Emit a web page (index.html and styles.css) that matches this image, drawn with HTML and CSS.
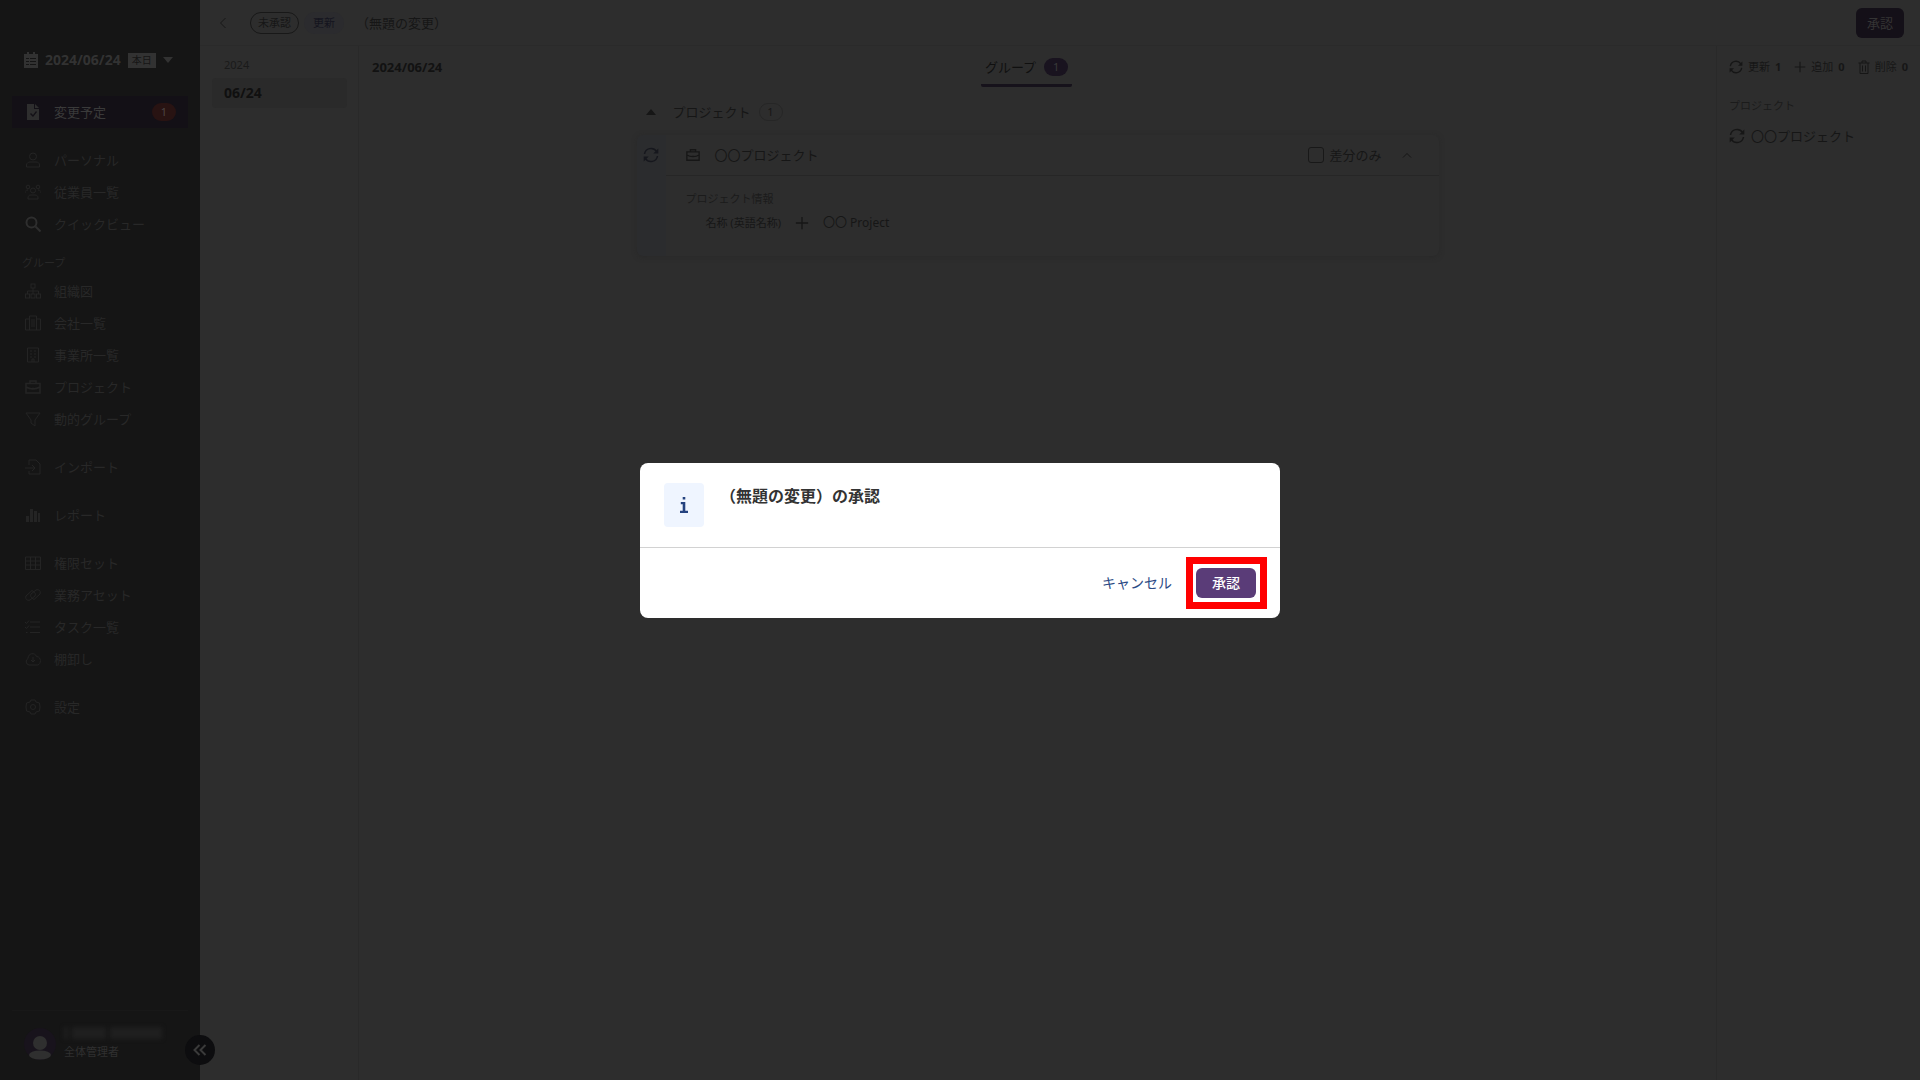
FILE: index.html
```html
<!DOCTYPE html>
<html lang="ja">
<head>
  <meta charset="UTF-8">
  <meta name="viewport" content="width=device-width, initial-scale=1.0">
  <title>変更予定</title>
  <link rel="stylesheet" href="styles.css">
</head>
<body>
  <svg class="sprite" aria-hidden="true">
    <symbol id="refresh" viewBox="0 0 16 16">
      <path d="M1.5 7a6.6 6.6 0 0 1 12-2.6M14.5 9a6.6 6.6 0 0 1-12 2.6" fill="none" stroke="currentColor" stroke-width="1.5"/>
      <path d="M15.3 1.6v5h-5zM.7 14.4v-5h5z" fill="currentColor"/>
    </symbol>
    <symbol id="plus" viewBox="0 0 16 16"><path d="M8 1v14M1 8h14" stroke-width="1.500"/></symbol>
    <symbol id="briefcase" viewBox="0 0 16 16"><path d="M1 4.500h14v9.500H1zM5 4.500V2h6v2.500M1 8c4 2.500 10 2.500 14 0M7 9.500h2" stroke-width="1.500"/></symbol>
  </svg>

  <div class="app">
    <aside class="sidebar">
      <button class="date-select" type="button">
        <svg width="14" height="16" viewBox="0 0 14 16"><path fill="currentColor" fill-rule="evenodd" d="M3 0h2v2h4V0h2v2h3v14H0V2h3zM2 6v1h3V6zm4 0v1h6V6zM2 9v1h3V9zm4 0v1h6V9zM2 12v1h3v-1zm4 0v1h6v-1z"/></svg>
        <span class="date">2024/06/24</span>
        <span class="today">本日</span>
        <svg width="10" height="6" viewBox="0 0 10 6"><path fill="currentColor" d="M0 0h10L5 6z"/></svg>
      </button>

      <nav class="menu">
        <ul>
          <li><a class="active" href="#"><svg viewBox="0 0 16 16"><path fill="currentColor" fill-rule="evenodd" d="M2 0h7v5h5v11H2zM10 0l4 4h-4zM5 10l3 3 4-5-1-1-3 4-2-2z"/></svg>変更予定<span class="count">1</span></a></li>
        </ul>
        <ul>
          <li><a href="#"><svg viewBox="0 0 16 16"><circle cx="8" cy="4.500" r="3.500"/><path d="M1.500 15v-2c0-2 2-3 3.500-3h6c2 0 3.500 1 3.500 3v2z"/></svg>パーソナル</a></li>
          <li><a href="#"><svg viewBox="0 0 16 16"><circle cx="3" cy="3" r="1.800"/><circle cx="13" cy="3" r="1.800"/><circle cx="8" cy="6.500" r="2.500"/><path d="M0 9V8c0-1 1-2 3-2M16 9V8c0-1-1-2-3-2M3 15v-1c0-2 1-3 3-3h4c2 0 3 1 3 3v1z"/></svg>従業員一覧</a></li>
          <li><a class="bright" href="#"><svg viewBox="0 0 16 16"><circle cx="6.500" cy="6.500" r="5"/><path d="M10.500 10.500l5 5"/></svg>クイックビュー</a></li>
        </ul>
        <h2>グループ</h2>
        <ul>
          <li><a href="#"><svg viewBox="0 0 16 16"><rect x="6" y="1" width="4" height="4"/><rect x="0.500" y="11" width="4" height="4"/><rect x="6" y="11" width="4" height="4"/><rect x="11.500" y="11" width="4" height="4"/><path d="M8 5v6M2.500 11V8h11v3"/></svg>組織図</a></li>
          <li><a href="#"><svg viewBox="0 0 16 16"><path d="M.5 15V4h4v11M4.500 15V1h7v14M11.500 4h4v11H.5M7 4v8M9 4v8"/></svg>会社一覧</a></li>
          <li><a href="#"><svg viewBox="0 0 16 16"><path d="M2.500 1h11v14h-11zM5 4h2M9 4h2M5 7h2M9 7h2M5 10h2M9 10h2M7 15v-3h2v3"/></svg>事業所一覧</a></li>
          <li><a href="#"><svg><use href="#briefcase"/></svg>プロジェクト</a></li>
          <li><a href="#"><svg viewBox="0 0 16 16"><path d="M1 2h14L10 9v6l-4-3V9z"/></svg>動的グループ</a></li>
        </ul>
        <ul>
          <li><a href="#"><svg viewBox="0 0 16 16"><path d="M4 6V1h7l4 4v10H4v-3M0 9h9M7 6l3 3-3 3"/></svg>インポート</a></li>
        </ul>
        <ul>
          <li><a href="#"><svg viewBox="0 0 16 16"><path fill="currentColor" d="M1 9h3v6H1zM5 2h3v13H5zM9 4h3v11H9zM13 6h2v9h-2z"/></svg>レポート</a></li>
        </ul>
        <ul>
          <li><a href="#"><svg viewBox="0 0 16 16"><path d="M.5 2h15v12.500H.5zM.5 6h15M.5 10h15M5.500 2v12M10.500 2v12"/></svg>権限セット</a></li>
          <li><a href="#"><svg viewBox="0 0 16 16"><path d="M9 5 7 3.500 1 9c-1 3 1 5 4 4l5-4c1-2 0-3-1-4M7 11l2 1.500 6-5.500c1-3-1-5-4-4L6 7c-1 2 0 3 1 4"/></svg>業務アセット</a></li>
          <li><a href="#"><svg viewBox="0 0 16 16"><path d="M5 3h10M5 8h10M5 13.500h10M0 3l1.500 1.500L4 1.500M0 8l1.500 1.500L4 6.500M1 13.500h1.500"/></svg>タスク一覧</a></li>
          <li><a href="#"><svg viewBox="0 0 16 16"><path d="M4 14a3.500 3.500 0 0 1-1-6.500C3 2 10 1 11.500 5.500c5 0 5 8 1 8.500zM8 6v5M6 9l2 2 2-2"/></svg>棚卸し</a></li>
        </ul>
        <ul>
          <li><a href="#"><svg viewBox="0 0 16 16"><path d="M6 1h4l1 2 3.500 1 .5 4-.5 4-3.500 1-1 2H6l-1-2-3.500-1L1 8l.5-4L5 3z"/><circle cx="8" cy="8" r="2.500"/></svg>設定</a></li>
        </ul>
      </nav>

      <div class="profile">
        <svg class="avatar" viewBox="0 0 32 32"><circle class="avatar-bg" cx="16" cy="16" r="16"/><circle cx="16" cy="15" r="7"/><ellipse cx="16" cy="27" rx="11" ry="4.500"/></svg>
        <div>
          <div class="masked"><i></i><i></i><i></i></div>
          <div class="role">全体管理者</div>
        </div>
      </div>
      <button class="collapse" type="button" aria-label="メニューを閉じる"><svg width="14" height="12" viewBox="0 0 14 12"><path d="M6.500 1l-5 5 5 5M12.500 1l-5 5 5 5"/></svg></button>
    </aside>

    <div class="page">
      <header class="topbar">
        <button class="back" type="button" aria-label="戻る"><svg width="8" height="12" viewBox="0 0 8 12"><path d="M6.500 1l-5 5 5 5"/></svg></button>
        <span class="pill outlined">未承認</span>
        <span class="pill update">更新</span>
        <h1>（無題の変更）</h1>
        <button class="btn-approve dimmed" type="button">承認</button>
      </header>

      <div class="columns">
        <div class="date-list">
          <div class="year">2024</div>
          <a class="day" href="#">06/24</a>
        </div>

        <main class="content">
          <div class="tabs">
            <span class="current-date">2024/06/24</span>
            <button class="tab" type="button">グループ<span class="tab-count">1</span></button>
          </div>

          <section class="group">
            <div class="group-head">
              <svg width="10" height="6" viewBox="0 0 10 6"><path fill="currentColor" d="M0 6h10L5 0z"/></svg>
              <span>プロジェクト</span>
              <span class="group-count">1</span>
            </div>
            <article class="card">
              <div class="strip"><svg width="16" height="16"><use href="#refresh"/></svg></div>
              <div class="card-main">
                <div class="card-head">
                  <svg class="case" width="14" height="14"><use href="#briefcase"/></svg>
                  <span>〇〇プロジェクト</span>
                  <label class="diff"><input type="checkbox">差分のみ</label>
                  <button class="fold" type="button" aria-label="折りたたむ"><svg width="10" height="6" viewBox="0 0 10 6"><path d="M1 5.500l4-4 4 4"/></svg></button>
                </div>
                <div class="card-body">
                  <div class="caption">プロジェクト情報</div>
                  <div class="field">
                    <span class="field-name">名称 (英語名称)</span>
                    <svg width="14" height="14"><use href="#plus"/></svg>
                    <span>〇〇 Project</span>
                  </div>
                </div>
              </div>
            </article>
          </section>
        </main>

        <aside class="summary">
          <div class="totals">
            <span><svg width="14" height="14"><use href="#refresh"/></svg>更新 <b>1</b></span>
            <span><svg width="12" height="12"><use href="#plus"/></svg>追加 <b>0</b></span>
            <span><svg width="12" height="14" viewBox="0 0 12 14"><path d="M.5 3h11M4 3V1h4v2M2 3v10.500h8V3M4.500 5.500v6M7.500 5.500v6"/></svg>削除 <b>0</b></span>
          </div>
          <div class="caption">プロジェクト</div>
          <a class="target" href="#"><svg width="16" height="16"><use href="#refresh"/></svg>〇〇プロジェクト</a>
        </aside>
      </div>
    </div>
  </div>

  <div class="overlay">
    <div class="modal" role="dialog" aria-labelledby="modalTitle">
      <div class="modal-head">
        <div class="info"><svg width="8" height="16" viewBox="0 0 8 16"><path fill="currentColor" d="M2.700 0h2.600v2.600H2.700zM.8 5h4.500v8.700H8V16H0v-2.300h2.700V7.200H.8z"/></svg></div>
        <h2 id="modalTitle">（無題の変更）の承認</h2>
      </div>
      <div class="modal-foot">
        <button class="btn-cancel" type="button">キャンセル</button>
        <button class="btn-approve marked" type="button">承認</button>
      </div>
    </div>
  </div>
</body>
</html>
```
FILE: styles.css
```css
* {
  box-sizing: border-box;
}

body {
  margin: 0;
  font-family: "Noto Sans", "Noto Sans CJK JP", sans-serif;
  font-size: 13px;
  line-height: 20px;
  color: #161616;
  background-color: #2d2d2d;
}

button {
  font: inherit;
  color: inherit;
  background: none;
  border: none;
  padding: 0;
  cursor: pointer;
}

a {
  color: inherit;
  text-decoration: none;
}

ul {
  list-style: none;
  margin: 0 0 16px;
  padding: 0;
}

h1, h2 {
  margin: 0;
  font-size: 13px;
  font-weight: 400;
}

svg {
  display: block;
  flex: none;
  fill: none;
  stroke: currentColor;
}

svg [fill="currentColor"] {
  stroke: none;
}

.sprite {
  position: absolute;
  width: 0;
  height: 0;
}

.app {
  display: flex;
  min-height: 100vh;
}

/* sidebar */
.sidebar {
  position: relative;
  display: flex;
  flex-direction: column;
  width: 200px;
  flex: none;
  padding: 48px 12px 19px;
  background-color: #151515;
  color: #282828;
}

.date-select {
  display: flex;
  align-items: center;
  gap: 7px;
  height: 24px;
  margin: 0 0 24px 12px;
  color: #323232;
}

.date {
  font-size: 14px;
  font-weight: 700;
}

.today {
  padding: 0 4px;
  font-size: 10px;
  line-height: 15px;
  background-color: #323232;
  color: #151515;
}

.menu a {
  display: flex;
  align-items: center;
  height: 32px;
  padding: 0 12px;
}

.menu svg {
  width: 16px;
  height: 16px;
  margin: 0 13px 0 1px;
  color: #242424;
}

.menu .active {
  background-color: #131016;
  color: #3a3a3a;
}

.menu .active svg,
.menu .bright svg {
  color: #2e2e2e;
}

.menu .bright svg {
  stroke-width: 2;
}

.menu h2 {
  margin-top: -16px;
  padding: 14px 0 3px 10px;
  font-size: 11px;
  line-height: 18px;
}

.count {
  width: 24px;
  margin-left: auto;
  border-radius: 9px;
  background-color: #281312;
  color: #4c4444;
  font-size: 11px;
  line-height: 18px;
  text-align: center;
}

.profile {
  display: flex;
  align-items: center;
  gap: 8px;
  margin-top: auto;
  padding: 16px 12px 0;
  border-top: 1px solid #181818;
}

.avatar {
  width: 32px;
  height: 32px;
  fill: #2f2f2f;
  stroke: none;
}

.avatar-bg {
  fill: #18131c;
}

.masked {
  display: flex;
  gap: 4px;
  height: 14px;
  filter: blur(2px);
}

.masked i {
  width: 4px;
  height: 12px;
  background-color: #1f1f1f;
}

.masked i:nth-child(2) {
  width: 34px;
}

.masked i:nth-child(3) {
  width: 52px;
}

.role {
  margin-top: 2px;
  font-size: 11px;
  line-height: 18px;
  color: #303030;
}

/* sits over the edge of the sidebar */
.collapse {
  position: absolute;
  right: -15px;
  bottom: 15px;
  display: flex;
  align-items: center;
  justify-content: center;
  width: 30px;
  height: 30px;
  border-radius: 50%;
  background-color: #0d0d0f;
  color: #3a3a3a;
}

.collapse svg {
  stroke-width: 2;
}

/* page */
.page {
  display: flex;
  flex-direction: column;
  flex: 1;
  min-width: 0;
}

.topbar {
  display: flex;
  align-items: center;
  height: 46px;
  padding: 0 16px;
  border-bottom: 1px solid #2a2a2a;
}

.back {
  margin: 0 23px 0 3px;
  color: #171717;
}

.pill {
  margin-right: 5px;
  padding: 0 8px;
  border: 1px solid transparent;
  border-radius: 11px;
  font-size: 11px;
  line-height: 20px;
}

.outlined {
  padding: 0 7px;
  border-color: #181818;
}

.update {
  background-color: #2b2b2e;
  color: #14141e;
}

.topbar h1 {
  margin-left: 7px;
}

.btn-approve {
  height: 30px;
  padding: 0 16px;
  border-radius: 6px;
  background-color: #5a3c78;
  color: #fff;
  font-size: 14px;
  font-weight: 500;
}

.dimmed {
  margin-left: auto;
  padding: 0 11px;
  background-color: #141018;
  color: #343434;
  font-size: 13px;
  font-weight: 400;
}

.columns {
  display: flex;
  flex: 1;
}

.date-list {
  width: 159px;
  padding: 9px 11px 0 12px;
  border-right: 1px solid #292929;
}

.year {
  padding-left: 12px;
  font-size: 11px;
  color: #1a1a1a;
}

.day {
  display: block;
  margin-top: 3px;
  padding-left: 12px;
  border-radius: 4px;
  background-color: #2a2a2a;
  font-size: 14px;
  font-weight: 700;
  line-height: 30px;
  color: #101010;
}

.content {
  flex: 1;
}

.tabs {
  display: grid;
  grid-template-columns: 1fr auto 1fr;
  align-items: center;
  height: 41px;
  padding: 0 35px 0 13px;
}

.current-date {
  font-weight: 700;
  color: #121212;
}

.tab {
  display: flex;
  align-items: center;
  gap: 8px;
  height: 41px;
  padding: 3px 4px 0;
  border-bottom: 3px solid #16121b;
  border-radius: 2px;
  color: #101010;
}

.tab-count,
.group-count {
  width: 24px;
  border-radius: 9px;
  font-size: 11px;
  line-height: 18px;
  text-align: center;
}

.tab-count {
  background-color: #19131f;
  color: #3a3a3a;
}

.group {
  max-width: 802px;
  margin: 0 auto;
  padding-top: 12px;
}

.group-head {
  display: flex;
  align-items: center;
  height: 26px;
  padding-left: 9px;
}

.group-head span {
  margin-left: 17px;
}

.group-head .group-count {
  margin-left: 8px;
  border: 1px solid #262626;
  line-height: 16px;
}

.card {
  display: flex;
  margin-top: 10px;
  border-radius: 6px;
  box-shadow: 0 1px 5px #282828;
}

.strip {
  display: flex;
  justify-content: center;
  width: 29px;
  padding-top: 12px;
  border-radius: 6px 0 0 6px;
  background-color: #2b2c2e;
  color: #16171d;
}

.card-main {
  flex: 1;
}

.card-head {
  display: flex;
  align-items: center;
  height: 41px;
  padding: 0 27px 0 20px;
  border-bottom: 1px solid #262626;
}

.case {
  margin-right: 15px;
}

.diff {
  display: flex;
  align-items: center;
  gap: 5px;
  margin-left: auto;
}

.diff input {
  appearance: none;
  width: 16px;
  height: 16px;
  margin: 0;
  border: 1px solid #181818;
  border-radius: 3px;
}

.fold {
  margin-left: 20px;
}

.card-body {
  padding: 13px 20px 23px;
}

.caption {
  font-size: 11px;
  color: #1b1b1b;
}

.field {
  display: flex;
  align-items: center;
  gap: 14px;
  padding: 4px 0 0 20px;
  font-size: 12px;
}

.field-name {
  font-size: 11px;
}

.summary {
  width: 204px;
  padding: 11px 12px 0;
  border-left: 1px solid #292929;
}

.totals {
  display: flex;
  justify-content: space-between;
  margin-bottom: 19px;
  font-size: 11px;
  white-space: nowrap;
}

.totals span {
  display: flex;
  align-items: center;
  gap: 5px;
}

.target {
  display: flex;
  align-items: center;
  gap: 6px;
  margin-top: 10px;
}

/* dialog */
.overlay {
  position: fixed;
  inset: 0;
  display: flex;
  align-items: center;
  justify-content: center;
}

.modal {
  width: 640px;
  max-width: 90%;
  border-radius: 8px;
  background-color: #fff;
}

.modal-head {
  display: flex;
  gap: 16px;
  padding: 20px 24px;
  border-bottom: 1px solid #d2d2d2;
}

.info {
  display: flex;
  align-items: center;
  justify-content: center;
  width: 40px;
  height: 44px;
  border-radius: 4px;
  background-color: #eff5ff;
  color: #24427f;
}

.modal-head h2 {
  font-size: 16px;
  font-weight: 700;
  line-height: 26px;
  color: #333;
}

.modal-foot {
  display: flex;
  align-items: center;
  justify-content: flex-end;
  gap: 24px;
  height: 70px;
  padding: 0 24px;
}

.btn-cancel {
  font-size: 14px;
  color: #2b4a85;
}

.marked {
  position: relative;
}

.marked::after {
  content: "";
  position: absolute;
  inset: -11px -11px -11px -10px;
  border: 7px solid #f00;
}
```
